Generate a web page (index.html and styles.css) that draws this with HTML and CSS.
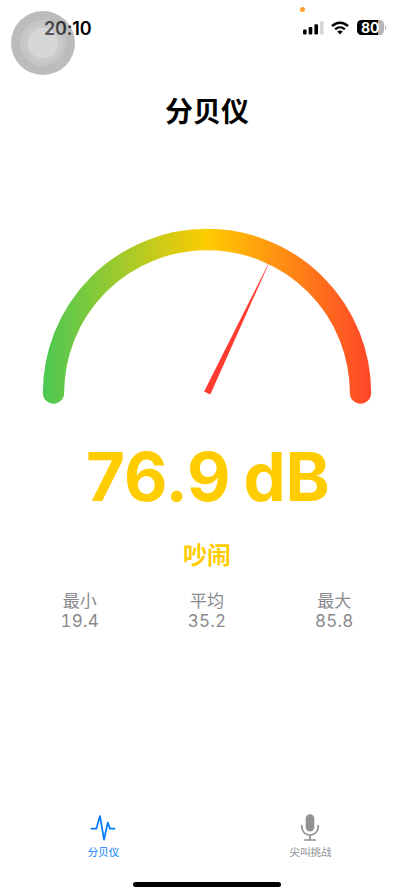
FILE: index.html
```html
<!DOCTYPE html>
<html lang="zh-CN">
<head>
  <meta charset="UTF-8" />
  <meta name="viewport" content="width=device-width, initial-scale=1.0"/>
  <title>分贝仪</title>
  <link rel="stylesheet" href="styles.css">
</head>
<body>
  <header class="status-bar">
    <span class="time">20:10</span>
    <div class="status-icons">
      <svg class="signal" width="21" height="14" viewBox="0 0 21 14">
        <rect x="0" y="8.5" width="3.6" height="5" rx="1"/>
        <rect x="5.7" y="6" width="3.6" height="7.5" rx="1"/>
        <rect x="11.4" y="3.2" width="3.6" height="10.3" rx="1"/>
        <rect x="17" y="0.3" width="3.6" height="13.2" rx="1" fill="#d5d5d5"/>
      </svg>
      <svg class="wifi" width="18" height="14" viewBox="0 0 18 14">
        <path d="M1 5.2C5.6 .6 12.4 .6 17 5.2" fill="none" stroke="#000" stroke-width="2.5"/>
        <path d="M4.2 8.4C7 5.7 11 5.7 13.8 8.4" fill="none" stroke="#000" stroke-width="2.4"/>
        <path d="M6.2 10.6Q9 8.4 11.8 10.6L9 13.5Z"/>
      </svg>
      <div class="battery"><span>80</span></div>
    </div>
    <i class="mic-dot"></i>
    <div class="touch"></div>
  </header>

  <main>
    <h1>分贝仪</h1>
    <svg class="gauge" width="330" height="176" viewBox="0 0 330 176">
      <defs>
        <linearGradient id="scale" gradientUnits="userSpaceOnUse" x1="1" y1="0" x2="329" y2="0">
          <stop offset="0" stop-color="#4bc853"/>
          <stop offset="0.5" stop-color="#ffcc00"/>
          <stop offset="1" stop-color="#ff4528"/>
        </linearGradient>
      </defs>
      <path d="M11.5 165A153.5 153.5 0 0 1 318.5 165" fill="none" stroke="url(#scale)" stroke-width="21.3" stroke-linecap="round"/>
      <path d="M162.1 163.4L230 28.5L168.3 166.4Z" fill="#ff3b30"/>
    </svg>
    <div class="value">76.9 dB</div>
    <div class="level">吵闹</div>
    <div class="stats">
      <div class="stat"><span>最小</span><b>19.4</b></div>
      <div class="stat"><span>平均</span><b>35.2</b></div>
      <div class="stat"><span>最大</span><b>85.8</b></div>
    </div>
  </main>

  <nav class="tabs">
    <a class="tab active">
      <svg width="26" height="28" viewBox="0 0 26 28">
        <path d="M1.5 14.7H6.3L10 2L14 25.7L17.8 8.5L20 14.7H24.5" fill="none" stroke="currentColor" stroke-width="1.7" stroke-linecap="round" stroke-linejoin="round"/>
      </svg>
      <span>分贝仪</span>
    </a>
    <a class="tab">
      <svg width="26" height="28" viewBox="0 0 26 28">
        <rect x="8.7" y="0.2" width="8.6" height="17.3" rx="4.3" fill="currentColor"/>
        <path d="M4.8 11.5V13.1A8.2 8 0 0 0 21.2 13.1V11.5M13 21.3V26M7.7 26H18.3" fill="none" stroke="currentColor" stroke-width="1.7" stroke-linecap="round"/>
      </svg>
      <span>尖叫挑战</span>
    </a>
  </nav>
  <div class="home-bar"></div>
</body>
</html>
```
FILE: styles.css
```css
* {
  box-sizing: border-box;
}

body {
  display: flex;
  flex-direction: column;
  height: 896px;
  margin: 0;
  background: #fff;
  font-family: Inter, "Noto Sans CJK SC", sans-serif;
  overflow: hidden;
}

.status-bar {
  position: relative;
  display: flex;
  justify-content: space-between;
  height: 80px;
  padding: 16px 30.5px 0 44px;
}

.time {
  font-size: 18px;
  line-height: 25px;
  font-weight: 600;
  letter-spacing: -0.2px;
}

.status-icons {
  display: flex;
  align-items: center;
  height: 23px;
}

.signal {
  margin-right: 7px;
}

.wifi {
  margin-right: 8px;
}

.battery {
  position: relative;
  width: 26.5px;
  height: 15px;
  border-radius: 4.5px;
  background: linear-gradient(to right, #000 21px, #b5b5b5 21px);
  color: #fff;
  font-size: 14px;
  line-height: 15px;
  font-weight: 700;
  text-align: center;
}

.battery::after {
  content: "";
  position: absolute;
  top: 5px;
  right: -2.5px;
  width: 1.5px;
  height: 5px;
  border-radius: 0 2px 2px 0;
  background: #b5b5b5;
}

.mic-dot {
  position: absolute;
  top: 7px;
  left: 300px;
  width: 5px;
  height: 5px;
  border-radius: 50%;
  background: #ffa02e;
}

.touch {
  position: absolute;
  top: 11px;
  left: 11px;
  width: 64px;
  height: 64px;
  border-radius: 50%;
  background: radial-gradient(circle, rgba(174, 174, 174, 0.5) 15px, rgba(149, 149, 149, 0.5) 15.5px 19px, rgba(139, 139, 139, 0.5) 19.5px 23px, rgba(106, 106, 106, 0.45) 23.5px);
}

main {
  display: flex;
  flex-direction: column;
  align-items: center;
}

h1 {
  margin: 11px 0 0;
  font-size: 28px;
  line-height: 42px;
  font-weight: 700;
}

.gauge {
  margin-top: 95px;
}

.value {
  margin-top: 33px;
  padding-left: 2px;
  color: #ffcc00;
  font-size: 67px;
  line-height: 80px;
  font-weight: 700;
  word-spacing: -3px;
  white-space: nowrap;
}

.level {
  margin-top: 21px;
  color: #ffcc00;
  font-size: 24px;
  line-height: 36px;
  font-weight: 700;
}

.stats {
  display: flex;
  width: 382px;
  margin-top: 17px;
  color: #8a8a8e;
}

.stat {
  flex: 1;
  display: flex;
  flex-direction: column;
  align-items: center;
  font-size: 17px;
  line-height: 20px;
}

.stat b {
  font-weight: 400;
  font-variant-numeric: tabular-nums;
  letter-spacing: 0.2px;
}

.tabs {
  display: flex;
  margin-top: auto;
}

.tab {
  flex: 1;
  display: flex;
  flex-direction: column;
  align-items: center;
  color: #929292;
  font-size: 10.5px;
  line-height: 16px;
}

.tab svg {
  margin-right: 1px;
}

.tab span {
  margin-top: 3px;
}

.active {
  color: #007aff;
}

.home-bar {
  width: 148px;
  height: 5px;
  margin: 21px auto 9px;
  border-radius: 3px;
  background: #000;
}
```
